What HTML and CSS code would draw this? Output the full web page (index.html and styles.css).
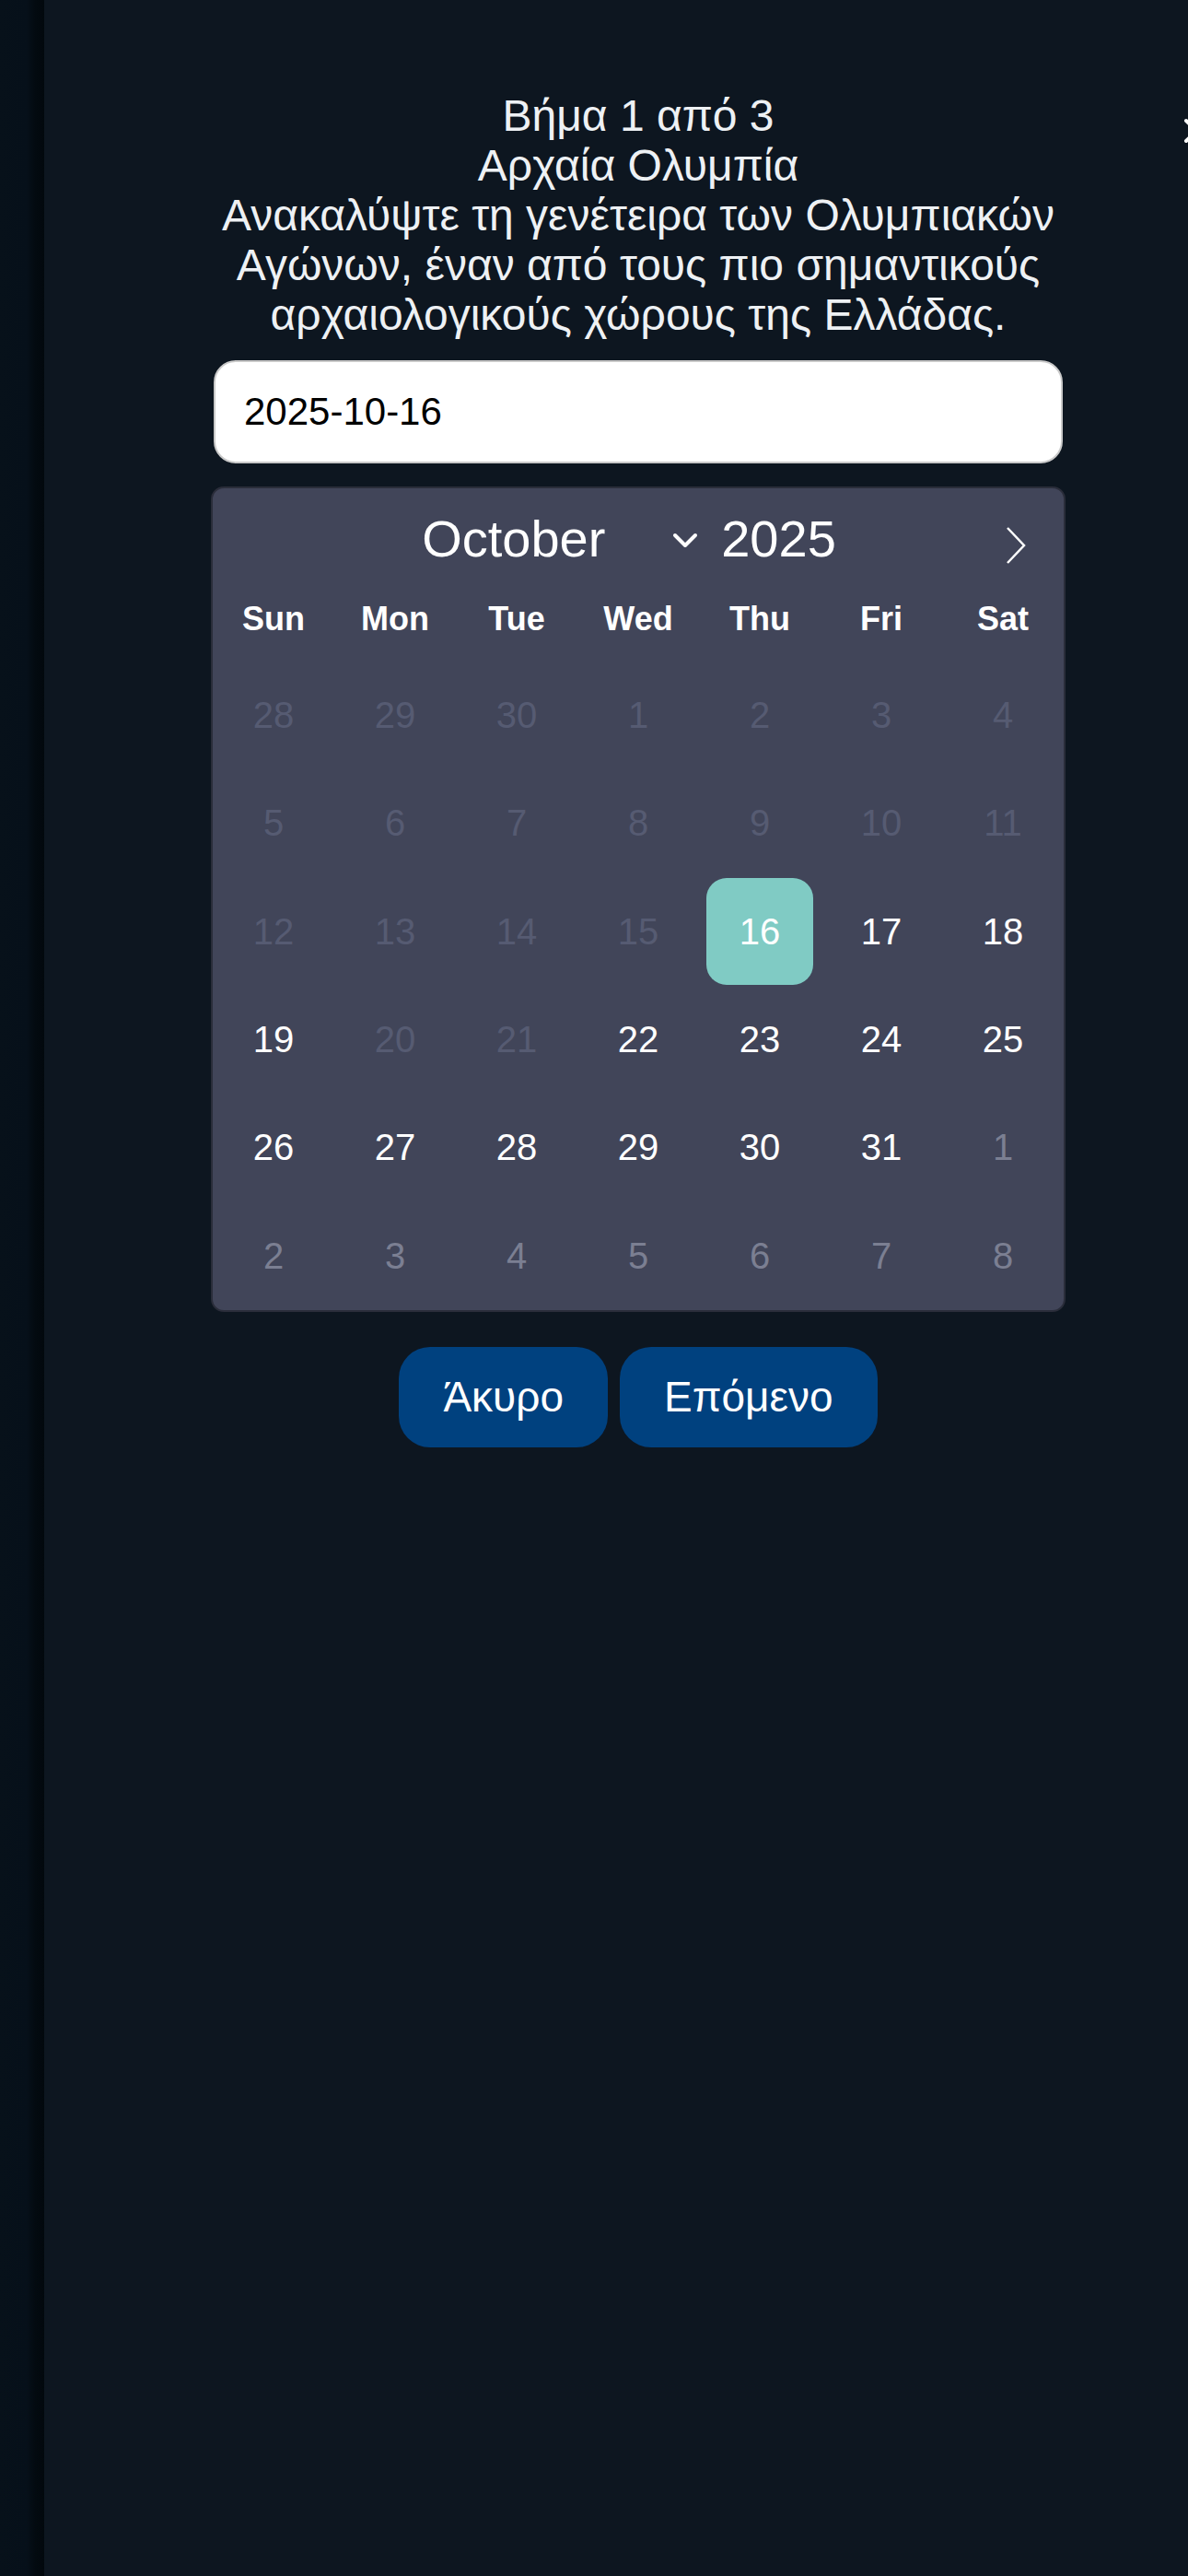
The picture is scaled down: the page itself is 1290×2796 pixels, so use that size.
FILE: index.html
```html
<!DOCTYPE html>
<html lang="el">
<head>
<meta charset="utf-8">
<title>Βήμα 1 από 3</title>
<link rel="stylesheet" href="styles.css">
</head>
<body>
<div class="app">
  <aside class="sidebar"></aside>
  <main class="main">
    <button class="close" aria-label="close">
      <svg width="28" height="28" viewBox="0 0 28 28"><path d="M3 3 L25 25 M25 3 L3 25" stroke="#ffffff" stroke-width="4" stroke-linecap="round" fill="none"/></svg>
    </button>
    <section class="content">
      <div class="intro">
        <p class="line">Βήμα 1 από 3</p>
        <p class="line">Αρχαία Ολυμπία</p>
        <p class="line">Ανακαλύψτε τη γενέτειρα των Ολυμπιακών Αγώνων, έναν από τους πιο σημαντικούς αρχαιολογικούς χώρους της Ελλάδας.</p>
      </div>
      <div class="date-input">2025-10-16</div>
      <div class="calendar">
        <div class="cal-header">
          <div class="month-select">
            <span class="month">October</span>
            <svg class="chev" width="28" height="18" viewBox="0 0 28 18"><path d="M3 3 L14 14 L25 3" stroke="#ffffff" stroke-width="4" fill="none" stroke-linecap="round" stroke-linejoin="round"/></svg>
          </div>
          <span class="year">2025</span>
          <svg class="next" width="24" height="42" viewBox="0 0 24 42"><path d="M3 2 L21 21 L3 40" stroke="#ffffff" stroke-width="2.5" fill="none"/></svg>
        </div>
        <div class="weekdays">
          <span>Sun</span><span>Mon</span><span>Tue</span><span>Wed</span><span>Thu</span><span>Fri</span><span>Sat</span>
        </div>
        <div class="days">
          <span class="day off">28</span><span class="day off">29</span><span class="day off">30</span><span class="day off">1</span><span class="day off">2</span><span class="day off">3</span><span class="day off">4</span>
          <span class="day off">5</span><span class="day off">6</span><span class="day off">7</span><span class="day off">8</span><span class="day off">9</span><span class="day off">10</span><span class="day off">11</span>
          <span class="day off">12</span><span class="day off">13</span><span class="day off">14</span><span class="day off">15</span><span class="day sel">16</span><span class="day">17</span><span class="day">18</span>
          <span class="day">19</span><span class="day off">20</span><span class="day off">21</span><span class="day">22</span><span class="day">23</span><span class="day">24</span><span class="day">25</span>
          <span class="day">26</span><span class="day">27</span><span class="day">28</span><span class="day">29</span><span class="day">30</span><span class="day">31</span><span class="day out">1</span>
          <span class="day out">2</span><span class="day out">3</span><span class="day out">4</span><span class="day out">5</span><span class="day out">6</span><span class="day out">7</span><span class="day out">8</span>
        </div>
      </div>
      <div class="actions">
        <button class="btn">Άκυρο</button>
        <button class="btn">Επόμενο</button>
      </div>
    </section>
  </main>
</div>
</body>
</html>
```
FILE: styles.css
```css
html, body {
  margin: 0;
  padding: 0;
  overflow: hidden;
  background: #0d1721;
}
body {
  font-family: "Liberation Sans", Arial, sans-serif;
  width: 1290px;
  height: 2796px;
}
.app {
  display: flex;
  height: 2796px;
}
.sidebar {
  flex: 0 0 48px;
  background: linear-gradient(to right, #07111a 0%, #06101a 60%, #030a10 80%, #02080d 100%);
}
.main {
  flex: 0 0 1290px;
  position: relative;
  background: #0d1620;
}
.close {
  position: absolute;
  left: 1237px;
  top: 128px;
  padding: 0;
  border: 0;
  background: none;
}
.close svg { display: block; }
.content {
  width: 928px;
  margin: 0 auto;
  padding-top: 99px;
  display: flex;
  flex-direction: column;
  align-items: center;
}
.intro {
  width: 922px;
  text-align: center;
  color: #eef1f4;
  font-size: 48px;
  line-height: 54px;
}
.line { margin: 0; }
.date-input {
  box-sizing: border-box;
  width: 922px;
  height: 112px;
  margin-top: 22px;
  background: #ffffff;
  border: 2px solid #c9c9c9;
  border-radius: 24px;
  padding: 0 31px;
  display: flex;
  align-items: center;
  font-size: 42px;
  color: #000000;
}
.calendar {
  box-sizing: border-box;
  width: 928px;
  margin-top: 25px;
  background: #414559;
  border: 2px solid #2a2d3a;
  border-radius: 14px;
  padding-top: 23px;
  color: #ffffff;
}
.cal-header {
  position: relative;
  height: 64px;
  display: flex;
  justify-content: center;
  align-items: center;
  padding-right: 20px;
  font-size: 56px;
  line-height: 64px;
}
.month-select {
  display: flex;
  align-items: center;
}
.month { width: 272px; }
.chev { margin-top: 4px; }
.year { margin-left: 25px; }
.next {
  position: absolute;
  right: 40px;
  top: 18px;
}
.weekdays {
  display: grid;
  grid-template-columns: repeat(7, 132px);
  margin-top: 34px;
  font-size: 36px;
  line-height: 41px;
  font-weight: bold;
  text-align: center;
}
.days {
  display: grid;
  grid-template-columns: repeat(7, 132px);
  grid-auto-rows: 117.3px;
  margin-top: 26px;
  font-size: 40px;
}
.day {
  justify-self: center;
  align-self: center;
  width: 116px;
  height: 116px;
  border-radius: 22px;
  display: flex;
  align-items: center;
  justify-content: center;
  color: #ffffff;
}
.day.off { color: #565b72; }
.day.out { color: #7b7f92; }
.day.sel { background: #80cbc4; }
.actions {
  display: flex;
  gap: 13px;
  margin-top: 38px;
}
.btn {
  font-family: "Liberation Sans", Arial, sans-serif;
  font-size: 46px;
  line-height: 53px;
  color: #ffffff;
  background: #00417f;
  border: 0;
  border-radius: 34px;
  padding: 28px 48px;
}
```
